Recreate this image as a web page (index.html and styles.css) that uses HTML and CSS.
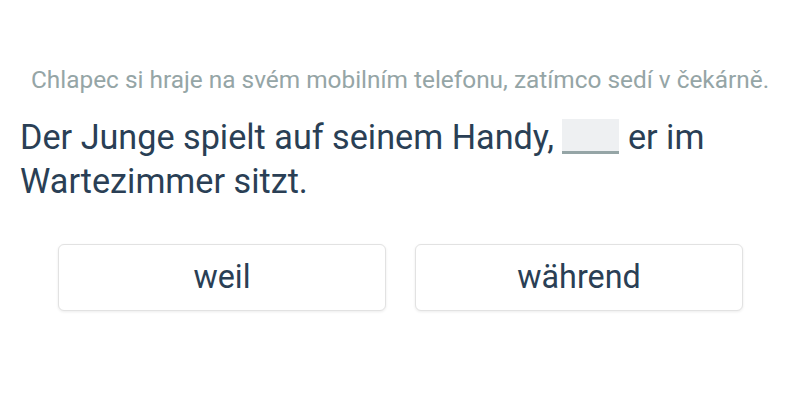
FILE: index.html
```
<!DOCTYPE html>
<html lang="de">
<head>
<meta charset="utf-8">
<title>Lückentext</title>
<link rel="stylesheet" href="styles.css">
</head>
<body>
<main class="exercise">
  <p class="hint">Chlapec si hraje na svém mobilním telefonu, zatímco sedí v čekárně.</p>
  <p class="sentence">Der Junge spielt auf seinem Handy, <span class="blank"></span> er im Wartezimmer sitzt.</p>
  <div class="options">
    <button class="option">weil</button>
    <button class="option">während</button>
  </div>
</main>
</body>
</html>
```
FILE: styles.css
```
html, body {
  margin: 0;
  padding: 0;
  background: #ffffff;
}
body {
  font-family: Roboto, "Liberation Sans", sans-serif;
  color: #2a3f55;
  width: 800px;
  height: 400px;
  overflow: hidden;
}
.exercise {
  padding: 65px 20px 0 20px;
}
.hint {
  margin: 0;
  font-size: 24.4px;
  line-height: 30px;
  color: #95a5a6;
  text-align: center;
  white-space: nowrap;
}
.sentence {
  margin: 20px 0 0 0;
  font-size: 34.2px;
  line-height: 44px;
  color: #2a3f55;
}
.blank {
  display: inline-block;
  width: 57px;
  height: 32px;
  background: #eef0f2;
  border-bottom: 3px solid #95a5a6;
  vertical-align: -4.5px;
}
.options {
  display: grid;
  grid-template-columns: 328px 328px;
  column-gap: 29px;
  margin: 41px 0 0 38px;
}
.option {
  height: 67px;
  font-family: Roboto, "Liberation Sans", sans-serif;
  font-size: 32.3px;
  color: #2a3f55;
  background: #ffffff;
  border: 1px solid #e2e2e2;
  border-radius: 6px;
  box-shadow: 0 1px 3px rgba(0, 0, 0, 0.08);
  padding: 0 0 2px 0;
  cursor: pointer;
}
```
